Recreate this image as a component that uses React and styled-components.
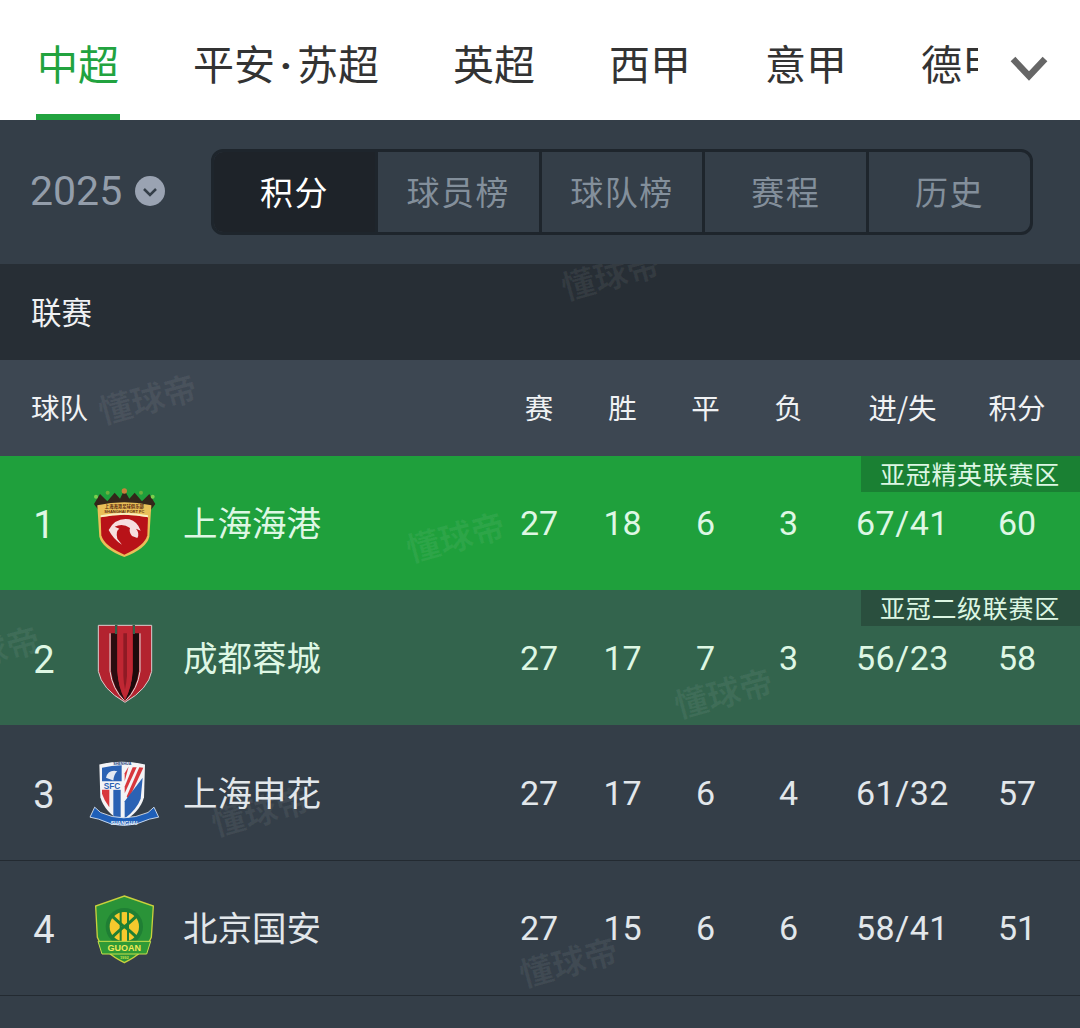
import React from 'react';
import styled, { createGlobalStyle } from 'styled-components';

const Global = createGlobalStyle`
  html, body { margin: 0; padding: 0; height: 1028px; overflow: hidden; background: #343e48; }
  * { box-sizing: border-box; }
  body { font-family: "Noto Sans CJK SC", "Noto Sans", sans-serif; }
`;

const Page = styled.div`
  width: 1080px; height: 1028px; overflow: hidden; background: #343e48; position: relative;
`;
const Nav = styled.nav`
  height: 120px; background: #fff; display: flex; align-items: stretch; position: relative;
`;
const Tabs = styled.div`
  width: 978px; padding-left: 36px; display: flex; gap: 72px; overflow: hidden;
`;
const Tab = styled.div`
  flex-shrink: 0; padding: 0 1px; height: 120px; line-height: 125px; font-size: 41px;
  color: ${p => (p.$active ? '#22a33f' : '#333')};
  border-bottom: 6px solid ${p => (p.$active ? '#22a33f' : 'transparent')};
`;
const Dot = styled.span`
  display: inline-block; width: 22px; text-align: center; font-family: Roboto, sans-serif; font-weight: 700;
`;
const More = styled.div`
  flex: 1; display: flex; align-items: center; padding-left: 32px; padding-top: 15px;
`;
const SeasonBar = styled.div`
  height: 144px; display: flex; align-items: center; padding-left: 30px;
`;
const Season = styled.div`
  width: 181px; display: flex; align-items: center; gap: 13px; padding-bottom: 2px;
  font-family: Roboto, sans-serif; font-size: 41px; color: #939daa;
`;
const Segments = styled.div`
  width: 822px; height: 86px; border: 3px solid #1e252c; border-radius: 12px; display: flex; overflow: hidden;
`;
const Segment = styled.div`
  flex: 1; display: flex; align-items: center; justify-content: center; padding-bottom: 3px;
  font-size: 33px; letter-spacing: 1.5px;
  color: ${p => (p.$active ? '#fff' : '#838f9b')};
  background: ${p => (p.$active ? '#1e2329' : 'transparent')};
  & + & { border-left: 3px solid #1e252c; }
`;
const LeagueRow = styled.div`
  height: 96px; background: #272e35; display: flex; align-items: center; padding-left: 31px; padding-bottom: 2px;
  font-size: 30.5px; color: #f0f2f4; position: relative; overflow: hidden;
`;
const grid = `
  display: grid;
  grid-template-columns: 497px 84px 83px 83px 83px 145px 84px;
  align-items: center;
`;
const HeadRow = styled.div`
  ${grid}
  height: 96px; padding-bottom: 3px; background: #3d4752; position: relative; overflow: hidden;
  font-size: 28.5px; color: #f0f2f4;
`;
const HeadTeam = styled.div` padding-left: 31px; `;
const Cell = styled.div` text-align: center; `;
const Score = styled(Cell)` letter-spacing: 0.5px; `;
const Row = styled.div`
  ${grid}
  height: ${p => p.$h || 135}px;
  background: ${p => p.$bg || '#343e48'};
  border-bottom: ${p => (p.$line ? '1px solid #232a31' : 'none')};
  position: relative; overflow: hidden;
  font-family: Roboto, sans-serif; font-size: 34px;
  color: ${p => (p.$bg ? '#def7e4' : '#e2e7eb')};
`;
const Team = styled.div`
  display: flex; align-items: center;
`;
const Rank = styled.div`
  width: 80px; padding: 4px 0 0 8px; text-align: center; font-size: 38px;
`;
const Name = styled.div`
  margin: 0 0 4px 13px; font-family: "Noto Sans CJK SC", sans-serif; font-size: 34.5px;
`;
const Zone = styled.div`
  position: absolute; top: 0; right: 0; width: 219px; height: 36px; padding-left: 19px;
  background: ${p => p.$bg}; color: #dcf6e3;
  font-family: "Noto Sans CJK SC", sans-serif; font-size: 25px; letter-spacing: 0.7px; line-height: 35px;
  white-space: nowrap;
`;
const Mark = styled.div`
  position: absolute; left: ${p => p.$x}px; top: ${p => p.$y}px;
  font-family: "Noto Sans CJK SC", sans-serif; font-weight: 700; font-size: 33.5px; line-height: 40px;
  color: rgba(255,255,255,${p => p.$a || 0.06}); transform: rotate(-15deg); white-space: nowrap; pointer-events: none;
`;
const Crest = styled.svg`
  display: block; flex-shrink: 0;
`;

const Port = () => (
  <Crest width="90" height="90" viewBox="0 -6 270 270">
    <path d="M42 72 L60 42 L82 64 L104 38 L120 56 L133 30 L148 56 L164 38 L186 64 L208 42 L226 72 L205 100 H62 Z" fill="#33261a" />
    <circle cx="48" cy="50" r="6" fill="#7ccf4e" /><circle cx="83" cy="38" r="6" fill="#6cae3e" />
    <circle cx="133" cy="33" r="8" fill="#c9823a" /><circle cx="183" cy="38" r="6" fill="#6cae3e" /><circle cx="218" cy="50" r="6" fill="#7ccf4e" />
    <path d="M52 76 Q133 58 214 76 L208 170 Q200 205 133 231 Q66 205 58 170 Z" fill="#e9bf58" />
    <path d="M62 112 Q133 96 204 112 L202 166 Q194 198 133 224 Q72 198 64 166 Z" fill="#b81218" />
    <path d="M62 106 Q133 90 204 106 L204 112 Q133 96 62 112 Z" fill="#fbeec0" />
    <path d="M86 150 Q106 112 148 118 Q172 124 182 152 L168 146 Q180 160 172 174 L156 168 Q146 156 150 144 Q128 128 104 140 L118 146 Q106 152 112 176 L126 194 Q100 178 86 150 Z" fill="#f6dfdf" />
    <text x="133" y="85" fontSize="13" fontWeight="700" textAnchor="middle" fill="#5a2a10" fontFamily="Noto Sans CJK SC, sans-serif">上海海港足球俱乐部</text>
    <text x="133" y="100" fontSize="12" fontWeight="700" textAnchor="middle" fill="#5a2a10" fontFamily="Liberation Sans, sans-serif">SHANGHAI PORT FC</text>
  </Crest>
);

const Chengdu = () => (
  <Crest width="90" height="90" viewBox="0 397 270 270">
    <path d="M55 434 H215 V572 Q205 625 135 665 Q65 625 55 572 Z" fill="#b3232f" stroke="#d9cfcf" strokeWidth="3" />
    <path d="M105 434 H112 V570 Q114 615 135 660 Q100 625 93 570 V458 H105 Z" fill="#2a0d10" />
    <path d="M158 434 H165 V458 H177 V570 Q170 625 135 660 Q156 615 158 570 Z" fill="#1c0a0c" />
    <path d="M90 458 V572 Q97 625 133 660" fill="none" stroke="#e0dbdb" strokeWidth="3" />
    <path d="M180 458 V572 Q173 625 137 660" fill="none" stroke="#e0dbdb" strokeWidth="3" />
    <rect x="105" y="434" width="7" height="26" fill="#33644d" />
    <rect x="158" y="434" width="7" height="26" fill="#33644d" />
    <path d="M112 436 H158 V570 Q155 620 135 656 Q115 620 112 570 Z" fill="#c02733" />
    <path d="M130 458 H141 V585 Q139 610 135 626 Q131 610 130 585 Z" fill="#8f1a24" />
  </Crest>
);

const Shenhua = () => (
  <Crest width="90" height="90" viewBox="0 -7.5 270 270">
    <path d="M58 42 Q125 26 195 42 L192 140 Q180 185 127 214 Q74 185 61 140 Z" fill="#f4f4f6" />
    <path d="M66 52 Q95 44 125 44 V92 H66 Z" fill="#2b62b4" />
    <path d="M66 118 H88 V170 Q72 150 66 130 Z" fill="#d8373c" />
    <rect x="100" y="118" width="22" height="84" fill="#2b62b4" />
    <path d="M134 108 L158 50 L170 50 L134 128 Z" fill="#d8373c" />
    <path d="M140 138 L178 50 L190 52 L146 146 Z" fill="#d8373c" />
    <path d="M134 68 L146 48 L134 92 Z" fill="#d8373c" />
    <path d="M134 152 L188 82 L182 145 Q170 178 134 204 Z" fill="#2b62b4" />
    <path d="M78 82 Q84 56 112 62 Q102 70 100 90 Z" fill="#e4e9f2" />
    <text x="96" y="114" fontSize="25" fontWeight="700" textAnchor="middle" fill="#2b62b4" fontFamily="Liberation Sans, sans-serif">SFC</text>
    <text x="127" y="43" fontSize="11" fontWeight="700" textAnchor="middle" fill="#1e3f7c" fontFamily="Liberation Sans, sans-serif">SHENHUA</text>
    <path d="M44 170 L30 200 L56 206 Q130 244 208 206 L236 200 L222 170 L204 186 Q130 218 62 186 Z" fill="#1f5fb8" stroke="#e6edf7" strokeWidth="2.5" />
    <text x="132" y="222" fontSize="15" fontWeight="700" textAnchor="middle" fill="#f2f6fb" fontFamily="Liberation Sans, sans-serif">SHANGHAI</text>
  </Crest>
);

const Guoan = () => (
  <Crest width="90" height="90" viewBox="0 397 270 270">
    <path d="M133 436 L220 466 L214 560 Q196 606 133 636 Q70 606 52 560 L47 466 Z" fill="#2a9338" stroke="#c9d13c" strokeWidth="4" />
    <circle cx="133" cy="528" r="56" fill="#1f7f34" />
    <circle cx="133" cy="528" r="44" fill="#f6c92d" />
    <path d="M98 498 Q128 526 133 528 Q138 526 168 498 M98 558 Q128 530 133 528 Q138 530 168 558" fill="none" stroke="#1f7f34" strokeWidth="9" />
    <path d="M122 480 V576 M144 480 V576" fill="none" stroke="#1f7f34" strokeWidth="6" />
    <path d="M54 572 H212 L200 610 H66 Z" fill="#2f9a36" stroke="#c9e04a" strokeWidth="3" />
    <text x="133" y="601" fontSize="27" fontWeight="700" textAnchor="middle" fill="#eee956" fontFamily="Liberation Sans, sans-serif">GUOAN</text>
    <text x="133" y="625" fontSize="12" fontWeight="700" textAnchor="middle" fill="#c9e04a" fontFamily="Liberation Sans, sans-serif">1992</text>
  </Crest>
);

const rows = [
  { rank: 1, name: '上海海港', crest: <Port />, v: [27, 18, 6, 3, '67/41', 60], bg: '#1fa03c', h: 134, zone: '亚冠精英联赛区', zbg: '#1a8033', mark: [405, 60] },
  { rank: 2, name: '成都蓉城', crest: <Chengdu />, v: [27, 17, 7, 3, '56/23', 58], bg: '#33644d', zone: '亚冠二级联赛区', zbg: '#2a4f3e', mark: [673, 82] },
  { rank: 3, name: '上海申花', crest: <Shenhua />, v: [27, 17, 6, 4, '61/32', 57], line: true, h: 136, mark: [210, 65] },
  { rank: 4, name: '北京国安', crest: <Guoan />, v: [27, 15, 6, 6, '58/41', 51], line: true, mark: [518, 80] },
];

export default function App() {
  return (
    <Page>
      <Global />
      <Nav>
        <Tabs>
          <Tab $active>中超</Tab>
          <Tab>平安<Dot>·</Dot>苏超</Tab>
          <Tab>英超</Tab>
          <Tab>西甲</Tab>
          <Tab>意甲</Tab>
          <Tab>德甲</Tab>
        </Tabs>
        <More>
          <svg width="38" height="26" viewBox="0 0 38 26"><path d="M3 4 L19 21 L35 4" fill="none" stroke="#666" strokeWidth="6.5" /></svg>
        </More>
      </Nav>
      <SeasonBar>
        <Season>
          2025
          <svg width="30" height="30" viewBox="0 0 30 30">
            <circle cx="15" cy="15" r="15" fill="#9aa3b2" />
            <path d="M9 13 L15 19 L21 13" fill="none" stroke="#343e48" strokeWidth="2.5" />
          </svg>
        </Season>
        <Segments>
          <Segment $active>积分</Segment>
          <Segment>球员榜</Segment>
          <Segment>球队榜</Segment>
          <Segment>赛程</Segment>
          <Segment>历史</Segment>
        </Segments>
      </SeasonBar>
      <LeagueRow>
        联赛
        <Mark $x={560} $y={-10}>懂球帝</Mark>
      </LeagueRow>
      <HeadRow>
        <HeadTeam>球队</HeadTeam>
        <Cell>赛</Cell><Cell>胜</Cell><Cell>平</Cell><Cell>负</Cell><Cell>进/失</Cell><Cell>积分</Cell>
        <Mark $x={97} $y={18}>懂球帝</Mark>
      </HeadRow>
      {rows.map(r => (
        <Row key={r.rank} $bg={r.bg} $h={r.h} $line={r.line}>
          <Team>
            <Rank>{r.rank}</Rank>
            {r.crest}
            <Name>{r.name}</Name>
          </Team>
          {r.v.map((x, i) => (i === 4 ? <Score key={i}>{x}</Score> : <Cell key={i}>{x}</Cell>))}
          {r.zone && <Zone $bg={r.zbg}>{r.zone}</Zone>}
          <Mark $x={r.mark[0]} $y={r.mark[1]}>懂球帝</Mark>
          {r.rank === 2 && <Mark $x={-60} $y={40}>懂球帝</Mark>}
        </Row>
      ))}
    </Page>
  );
}
